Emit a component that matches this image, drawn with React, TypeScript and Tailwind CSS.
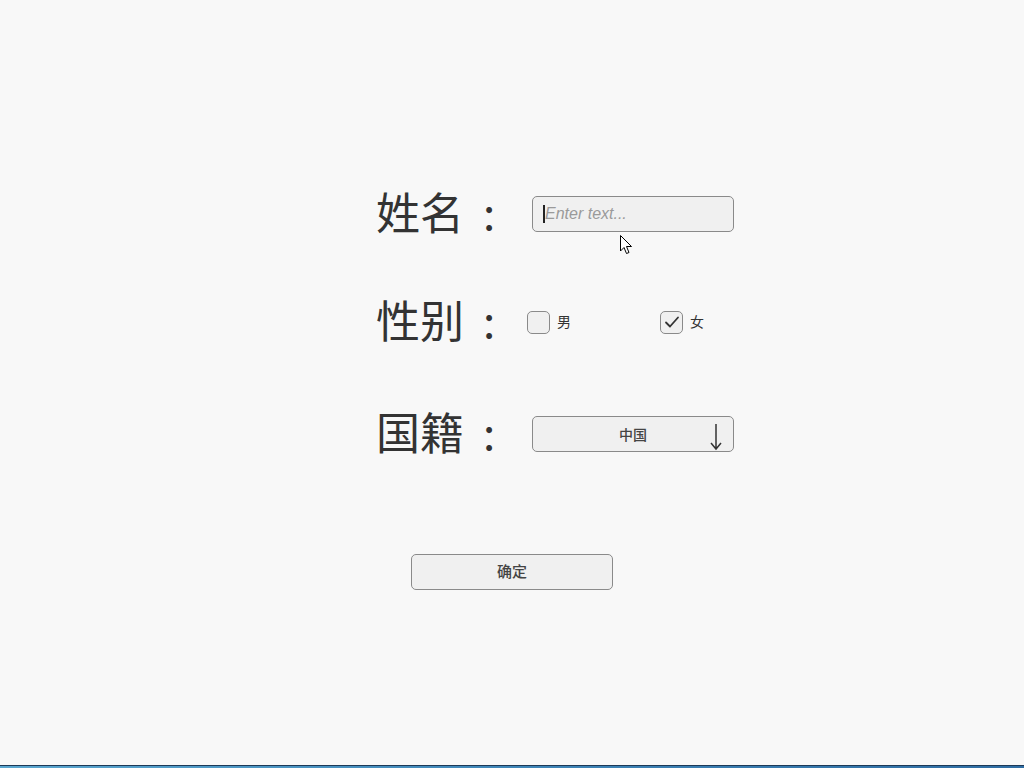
const cjk = { fontFamily: '"Noto Sans CJK SC", "Noto Sans", sans-serif' };

function Box({ checked }: { checked?: boolean }) {
  return (
    <div className="flex h-[23px] w-[23px] items-center justify-center rounded-[5px] border border-[#8a8a8a] bg-[#f0f0f0]">
      {checked && (
        <svg width="16" height="14" viewBox="0 0 16 14" fill="none">
          <path d="M2 7.5 L6 11.5 L14 2.5" stroke="#333" strokeWidth="1.8" strokeLinecap="round" strokeLinejoin="round" />
        </svg>
      )}
    </div>
  );
}

function Label({ text }: { text: string }) {
  return (
    <div className="flex w-[156px] text-[44px] leading-[44px] text-[#333] -translate-y-[3px]" style={cjk}>
      <span>{text}</span>
      <span className="ml-[19px]">:</span>
    </div>
  );
}

export default function App() {
  return (
    <div className="relative flex h-[768px] w-[1024px] flex-col bg-[#f8f8f8]">
      <div className="flex flex-1 flex-col pt-[192px] pl-[376px]">
        <div className="flex h-[44px] items-center">
          <Label text="姓名" />
          <div className="flex h-[36px] w-[202px] items-center rounded-[5px] border border-[#8a8a8a] bg-[#f0f0f0] pl-[10px]">
            <span className="h-[18px] w-[2px] bg-[#222]" />
            <span className="text-[16px] italic text-[#9a9a9a]" style={{ fontFamily: '"Liberation Sans", Arial, sans-serif' }}>
              Enter text...
            </span>
          </div>
        </div>

        <div className="mt-[64px] flex h-[44px] items-center">
          <Label text="性别" />
          <div className="ml-[-5px] flex items-center">
            <div className="flex w-[133px] items-center gap-[7px]">
              <Box />
              <span className="-translate-y-[1px] text-[14px] text-[#333]" style={cjk}>男</span>
            </div>
            <div className="flex items-center gap-[7px]">
              <Box checked />
              <span className="-translate-y-[1px] text-[14px] text-[#333]" style={cjk}>女</span>
            </div>
          </div>
        </div>

        <div className="mt-[68px] flex h-[44px] items-center">
          <Label text="国籍" />
          <div className="relative flex h-[36px] w-[202px] items-center justify-center rounded-[5px] border border-[#8a8a8a] bg-[#f0f0f0]">
            <span className="text-[14px] font-medium text-[#444]" style={cjk}>中国</span>
            <svg className="absolute right-[11px] top-[6px]" width="12" height="28" viewBox="0 0 12 28" fill="none">
              <path d="M6 1 L6 26 M1 20 L6 26 L11 20" stroke="#333" strokeWidth="1.5" />
            </svg>
          </div>
        </div>

        <div className="ml-[35px] mt-[98px] flex h-[36px] w-[202px] items-center justify-center rounded-[5px] border border-[#8a8a8a] bg-[#f0f0f0]">
          <span className="-translate-y-[1px] text-[15px] font-medium text-[#444]" style={cjk}>确定</span>
        </div>
      </div>

      <div className="h-[1px] bg-[#1d3a58]" />
      <div className="h-[2px] bg-gradient-to-r from-[#5aa6cf] via-[#3f86b8] to-[#2f6da3]" />

      <svg className="absolute left-[620px] top-[235px]" width="13" height="20" viewBox="0 0 13 20">
        <path d="M0.5 0.5 L0.5 16 L4 12.5 L6.5 18.5 L9 17.5 L6.5 11.5 L11.5 11.5 Z" fill="#fff" stroke="#000" strokeWidth="1" />
      </svg>
    </div>
  );
}
